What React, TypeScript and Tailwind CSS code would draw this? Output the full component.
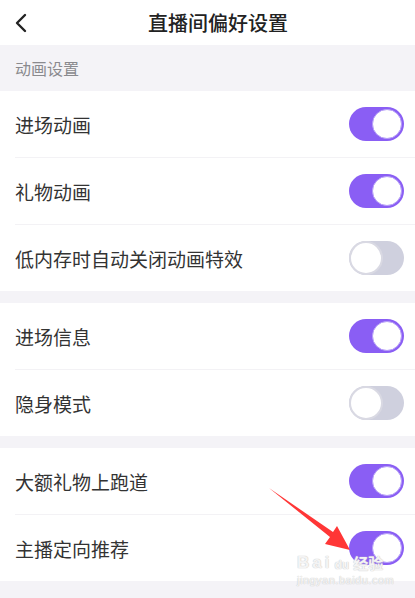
import { useState } from 'react';

type Item = { label: string; on: boolean };

const groups: Item[][] = [
    [
        { label: '进场动画', on: true },
        { label: '礼物动画', on: true },
        { label: '低内存时自动关闭动画特效', on: false },
    ],
    [
        { label: '进场信息', on: true },
        { label: '隐身模式', on: false },
    ],
    [
        { label: '大额礼物上跑道', on: true },
        { label: '主播定向推荐', on: true },
    ],
];

function Toggle({ on, onClick }: { on: boolean; onClick: () => void }) {
    return (
        <button
            type="button"
            onClick={onClick}
            className={
                on
                    ? 'flex h-[34px] w-[55px] items-center justify-end rounded-full bg-[#8a5ef4] px-[2px]'
                    : 'flex h-[34px] w-[55px] items-center justify-start rounded-full bg-[#cfd0de]'
            }
        >
            {on ? (
                <span className="h-[30px] w-[30px] rounded-full border border-[#b49cf7] bg-white" />
            ) : (
                <span className="h-[34px] w-[34px] rounded-full border-2 border-[#d9d9e3] bg-white" />
            )}
        </button>
    );
}

export default function App() {
    const [state, setState] = useState(groups.map((g) => g.map((i) => i.on)));

    const flip = (gi: number, ii: number) => {
        setState((s) => s.map((g, a) => g.map((v, b) => (a === gi && b === ii ? !v : v))));
    };

    return (
        <div
            className="relative h-[598px] w-[415px] overflow-hidden bg-[#f4f3f7] text-[#333]"
            style={{ fontFamily: '"Noto Sans CJK SC", "Noto Sans", sans-serif' }}
        >
            {/* header */}
            <div className="flex h-[45px] items-center bg-white">
                <div className="w-[42px] pl-[13px]">
                    <svg width="16" height="20" viewBox="0 0 16 20" fill="none">
                        <path d="M12 2 L4 10 L12 18" stroke="#222" strokeWidth="2.4" strokeLinecap="round" strokeLinejoin="round" />
                    </svg>
                </div>
                <div className="flex-1 text-center text-[20px] font-medium leading-none text-[#222]">直播间偏好设置</div>
                <div className="w-[21px]" />
            </div>

            <div className="flex h-[46px] items-center px-[15px] text-[16px] text-[#8a8a8e]">动画设置</div>

            {groups.map((g, gi) => (
                <div key={gi} className={gi > 0 ? 'mt-[12px] bg-white' : 'bg-white'}>
                    {g.map((item, ii) => (
                        <div
                            key={item.label}
                            className={
                                ii < g.length - 1
                                    ? 'ml-[15px] flex h-[67px] items-center justify-between border-b border-[#f3f2f5] pr-[11px]'
                                    : 'ml-[15px] flex h-[66px] items-center justify-between pr-[11px]'
                            }
                        >
                            <span className="text-[19px] leading-none">{item.label}</span>
                            <Toggle on={state[gi][ii]} onClick={() => flip(gi, ii)} />
                        </div>
                    ))}
                </div>
            ))}

            {/* red arrow annotation */}
            <svg className="absolute left-0 top-0" width="415" height="598" viewBox="0 0 415 598">
                <polygon points="269,488 333,532 337,526 350,550 325,544 330,537" fill="#ff3636" />
            </svg>

            {/* watermark */}
            <div
                className="absolute left-[297px] top-[554px] flex flex-col items-start leading-none text-white/80 [text-shadow:0_0_1px_#c8c8c8,0_0_1px_#c8c8c8]"
                style={{ fontFamily: '"Liberation Sans", "Noto Sans CJK SC", sans-serif' }}
            >
                <span className="flex items-end text-[17px] font-bold tracking-[3px]">
                    Bai
                    <span className="ml-[2px] text-[12px] tracking-normal">du</span>
                    <span className="ml-[4px] text-[15px] tracking-normal">经验</span>
                </span>
                <span className="mt-[4px] text-[11px] tracking-[0.5px]">jingyan.baidu.com</span>
            </div>
        </div>
    );
}
